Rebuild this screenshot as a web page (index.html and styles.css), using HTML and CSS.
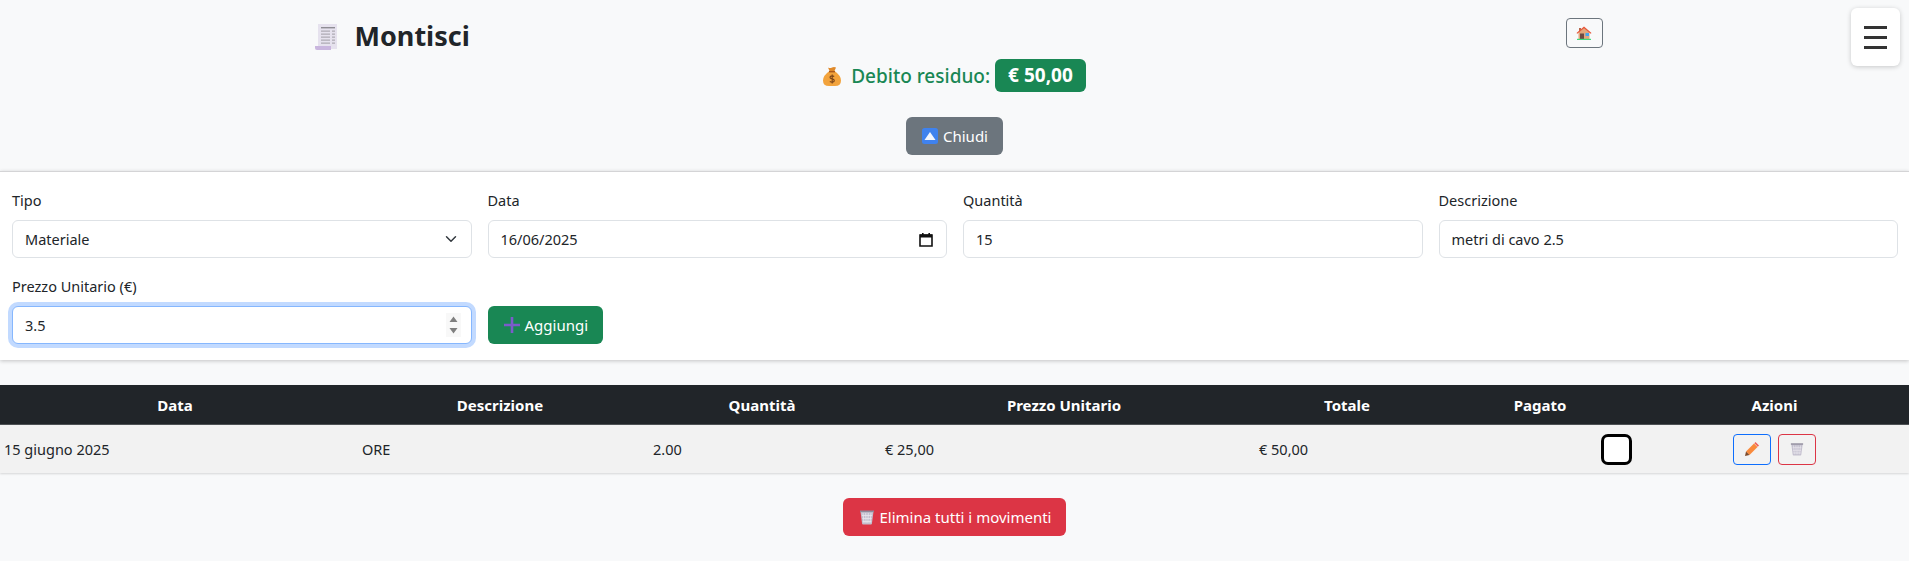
FILE: index.html
```html
<!DOCTYPE html>
<html lang="it">
<head>
  <meta charset="UTF-8">
  <title>Montisci</title>
  <link rel="stylesheet" href="styles.css">
</head>
<body>
  <svg class="defs" width="0" height="0">
    <symbol id="trash" viewBox="0 0 16 16">
      <path d="M1.5 2.5h13l-1.6 12.2q-.1.8-.9.8H4q-.8 0-.9-.8z" fill="#c3bfce"/>
      <path d="M1 1.5h14v1.6H1z" fill="#8f8b9c"/>
      <path d="M4 4l1 10M6.7 4l.4 10M9.3 4l-.4 10M12 4l-1 10M3 6.5h10M3.4 9.5h9.2M3.7 12.5h8.6" stroke="#e9e6ee" stroke-width=".8" fill="none"/>
    </symbol>
  </svg>

  <button class="menu-toggle">
    <span></span><span></span><span></span>
  </button>

  <div class="container">
    <div class="title-row">
      <h3 class="title">
        <svg class="icon-receipt" viewBox="0 0 23 27">
          <path d="M3 1h19v25H3z" fill="#e6e2ee"/>
          <path d="M0 23h16v4H2q-2 0-2-2z" fill="#c9b6de"/>
          <path d="M6 4h14v1.4H6z" fill="#8f8d94"/>
          <path d="M6 7.500h9v1.300H6zM6 10.500h9v1.300H6zM6 13.500h9v1.300H6zM6 16.500h9v1.300H6zM6 19.500h9v1.300H6zM17 7.500h3v1.300h-3zM17 10.500h3v1.300h-3zM17 13.500h3v1.300h-3zM17 16.500h3v1.300h-3zM17 19.500h3v1.300h-3z" fill="#aeabb4"/>
        </svg>
        Montisci
      </h3>
      <button class="btn-home">
        <svg viewBox="0 0 16 14" width="16" height="14">
          <path d="M3 2h2v4H3z" fill="#b5654a"/>
          <path d="M2.500 6L8 1.500 13.500 6v7h-11z" fill="#e2a77c"/>
          <path d="M.5 7L8 .5 15.500 7l-.8.8L8 2.200 1.300 7.800z" fill="#e8573a"/>
          <path d="M4 7.500h4V13H4z" fill="#6f4a42"/>
          <path d="M9.500 7h3.500v3H9.500z" fill="#45a7ee"/>
          <path d="M1 12.800h14V14H1z" fill="#3fdc7c"/>
        </svg>
      </button>
    </div>

    <div class="debt">
      <svg class="icon-bag" viewBox="0 0 18 20">
        <path d="M5 1.500q2 1 4 0t4 0L11.500 5h-5z" fill="#e08a2a"/>
        <path d="M6.500 5h5Q18 9.500 18 14.500 18 20 12 20H6Q0 20 0 14.500 0 9.500 6.500 5z" fill="#f2a33c"/>
        <path d="M6 5h6v1.400H6z" fill="#a9581c"/>
        <path d="M11.200 10.500Q9 9.300 7.300 10.500q-1 1.500 1.700 2.300 3 .8 2 2.700-1.800 1.300-4.200 0M9.200 8.500v9" stroke="#7a4418" stroke-width="1.100" fill="none"/>
      </svg>
      <span class="debt-label">Debito residuo:</span>
      <span class="badge">€ 50,00</span>
    </div>

    <div class="toggle-row">
      <button class="btn btn-grey">
        <svg class="icon-16" viewBox="0 0 16 16">
          <rect width="16" height="16" rx="2.500" fill="#3f82ee"/>
          <path d="M8 4l5.500 8h-11z" fill="#f2f6ff"/>
        </svg>
        Chiudi
      </button>
    </div>
  </div>

  <form class="entry-form">
    <div class="form-grid">
      <div>
        <label>Tipo</label>
        <select class="control">
          <option>Materiale</option>
        </select>
      </div>
      <div>
        <label>Data</label>
        <div class="control field">
          <input type="text" value="16/06/2025">
          <svg class="icon-calendar" viewBox="0 0 14 15" width="14" height="15">
            <path d="M1 3h12v11H1z" fill="none" stroke="#111" stroke-width="1.600"/>
            <path d="M1 2.500h12v3H1zM3 1h1.600v2H3zM9.400 1H11v2H9.400z" fill="#111"/>
          </svg>
        </div>
      </div>
      <div>
        <label>Quantità</label>
        <input class="control" type="text" value="15">
      </div>
      <div>
        <label>Descrizione</label>
        <input class="control" type="text" value="metri di cavo 2.5">
      </div>
      <div>
        <label>Prezzo Unitario (€)</label>
        <div class="control field focused">
          <input type="text" value="3.5">
          <svg class="icon-spin" viewBox="0 0 15 24" width="15" height="24">
            <path d="M0 0h15v24H0z" fill="#f8f8f8"/>
            <path d="M7.500 3.500l4 5.500h-8zM7.500 20.500l-4-5.500h8z" fill="#808080"/>
          </svg>
        </div>
      </div>
      <div class="form-action">
        <button type="button" class="btn btn-green">
          <svg class="icon-16" viewBox="0 0 16 16">
            <path d="M6.700 0h2.600v6.700H16v2.600H9.300V16H6.700V9.300H0V6.700h6.700z" fill="#7b5bcb"/>
          </svg>
          Aggiungi
        </button>
      </div>
    </div>
  </form>

  <table class="moves">
    <colgroup>
      <col class="col-date">
      <col class="col-desc">
      <col class="col-qty">
      <col class="col-price">
      <col class="col-total">
      <col class="col-paid">
      <col>
    </colgroup>
    <thead>
      <tr>
        <th>Data</th>
        <th>Descrizione</th>
        <th>Quantità</th>
        <th>Prezzo Unitario</th>
        <th>Totale</th>
        <th>Pagato</th>
        <th>Azioni</th>
      </tr>
    </thead>
    <tbody>
      <tr>
        <td class="cell-date">15 giugno 2025</td>
        <td class="cell-desc">ORE</td>
        <td class="cell-qty">2.00</td>
        <td class="cell-price">€ 25,00</td>
        <td class="cell-total">€ 50,00</td>
        <td class="cell-paid"><span class="checkbox"></span></td>
        <td class="cell-actions">
          <button class="btn-small btn-outline-blue">
            <svg viewBox="0 0 14 14" width="14" height="14">
              <path d="M10.500 0L14 3.500 12.800 4.700 9.300 1.200z" fill="#f0605a"/>
              <path d="M9 1.500L12.500 5 4.500 13 1 9.500z" fill="#f98a3c"/>
              <path d="M1 9.500L4.500 13 0 14z" fill="#7c4a2c"/>
            </svg>
          </button>
          <button class="btn-small btn-outline-red">
            <svg width="14" height="14"><use href="#trash"/></svg>
          </button>
        </td>
      </tr>
    </tbody>
  </table>

  <div class="footer-row">
    <button class="btn btn-red">
      <svg class="icon-16" width="16" height="16"><use href="#trash"/></svg>
      Elimina tutti i movimenti
    </button>
  </div>
</body>
</html>
```

FILE: styles.css
```css
body {
  margin: 0;
  background-color: #f8f9fa;
  color: #212529;
  font-family: "Noto Sans", sans-serif;
  font-size: 15px;
  line-height: 24px;
}
.defs {
  display: block;
  height: 0;
}
.menu-toggle {
  position: absolute;
  top: 8px;
  right: 9px;
  width: 49px;
  height: 58px;
  padding: 0;
  display: flex;
  flex-direction: column;
  align-items: center;
  justify-content: center;
  gap: 7px;
  background-color: #fff;
  border: none;
  border-radius: 6px;
  box-shadow: 0 1px 5px rgba(0, 0, 0, 0.2);
}
.menu-toggle span {
  display: block;
  width: 23px;
  height: 3px;
  background-color: #333;
}
.container {
  width: 1296px;
  margin: 0 auto;
  padding-top: 18px;
}
.title-row {
  display: flex;
  justify-content: space-between;
  align-items: flex-start;
  height: 41px;
}
.title {
  margin: 0;
  padding-left: 8px;
  display: flex;
  align-items: center;
  gap: 17px;
  font-size: 27px;
  font-weight: 700;
  line-height: 36px;
}
.icon-receipt {
  width: 23px;
  height: 27px;
}
.btn-home {
  width: 37px;
  height: 30px;
  padding: 0;
  display: flex;
  align-items: center;
  justify-content: center;
  background: none;
  border: 1px solid #6c757d;
  border-radius: 4px;
}
.debt {
  display: flex;
  align-items: center;
  justify-content: center;
  height: 33px;
  font-size: 19px;
  color: #198754;
  font-weight: 500;
}
.icon-bag {
  width: 18px;
  height: 20px;
  margin-right: 10px;
}
.badge {
  margin-left: 5px;
  padding: 0 13px;
  height: 33px;
  line-height: 33px;
  background-color: #198754;
  color: #fff;
  font-weight: 700;
  border-radius: 6px;
}
.toggle-row {
  margin-top: 25px;
  margin-bottom: 16px;
  text-align: center;
}
.btn {
  display: inline-flex;
  align-items: center;
  gap: 5px;
  height: 38px;
  padding: 0 15px 0 16px;
  border: none;
  border-radius: 6px;
  color: #fff;
  font-family: inherit;
  font-size: 15px;
}
.btn-grey {
  background-color: #6c757d;
}
.btn-green {
  background-color: #198754;
}
.btn-red {
  background-color: #dc3545;
}
.icon-16 {
  width: 16px;
  height: 16px;
}
.entry-form {
  padding: 16px 11px 16px 12px;
  background-color: #fff;
  border-top: 1px solid #d4d4d6;
  box-shadow: 0 1px 4px rgba(0, 0, 0, 0.22);
}
.form-grid {
  display: grid;
  grid-template-columns: repeat(4, 1fr);
  gap: 16px;
}
label {
  display: block;
  margin-bottom: 8px;
  font-size: 14.500px;
}
.control {
  display: block;
  box-sizing: border-box;
  width: 100%;
  height: 38px;
  padding: 0 12px;
  background-color: #fff;
  border: 1px solid #dee2e6;
  border-radius: 6px;
  color: #212529;
  font-family: inherit;
  font-size: 14.500px;
  outline: none;
}
select.control {
  appearance: none;
  background-image: url("data:image/svg+xml,%3csvg xmlns='http://www.w3.org/2000/svg' viewBox='0 0 16 16'%3e%3cpath fill='none' stroke='%23343a40' stroke-linecap='round' stroke-linejoin='round' stroke-width='2' d='m2 5 6 6 6-6'/%3e%3c/svg%3e");
  background-repeat: no-repeat;
  background-position: right 12px center;
  background-size: 16px 12px;
}
.field {
  display: flex;
  align-items: center;
}
.field input {
  flex: 1;
  min-width: 0;
  padding: 0;
  border: none;
  outline: none;
  color: #212529;
  font-family: inherit;
  font-size: 14.500px;
}
.icon-calendar {
  margin-right: 1px;
}
.focused {
  border-color: #86b7fe;
  box-shadow: 0 0 0 4px #c2daff;
}
.icon-spin {
  margin-right: -2px;
}
.form-action {
  grid-column: span 3;
  display: flex;
  align-items: flex-end;
}
.moves {
  width: 100%;
  margin-top: 25px;
  border-collapse: collapse;
  table-layout: fixed;
  box-shadow: 0 1px 2px rgba(0, 0, 0, 0.14);
}
.col-date {
  width: 350px;
}
.col-desc {
  width: 300px;
}
.col-qty {
  width: 224px;
}
.col-price {
  width: 380px;
}
.col-total {
  width: 186px;
}
.col-paid {
  width: 200px;
}
.moves th {
  height: 39px;
  padding: 0;
  background-color: #212529;
  border-bottom: 1px solid #4d5154;
  color: #fff;
  font-size: 15px;
  font-weight: 700;
}
.moves td {
  height: 48px;
  padding: 0;
  background-color: #f2f2f2;
  font-size: 14.500px;
}
.cell-date {
  padding-left: 4px !important;
}
.cell-desc {
  padding-left: 12px !important;
}
.cell-qty {
  padding-left: 3px !important;
}
.cell-price {
  padding-left: 11px !important;
}
.cell-total {
  padding-left: 5px !important;
}
.cell-paid {
  text-align: right;
  padding-right: 8px !important;
}
.checkbox {
  display: inline-block;
  box-sizing: border-box;
  width: 31px;
  height: 31px;
  vertical-align: middle;
  background-color: #fff;
  border: 3px solid #000;
  border-radius: 7px;
}
.cell-actions {
  text-align: center;
}
.btn-small {
  width: 38px;
  height: 31px;
  margin: 0 2px;
  padding: 0;
  background: none;
  border-radius: 4px;
  vertical-align: middle;
}
.btn-small svg {
  display: block;
  margin: 0 auto;
}
.btn-outline-blue {
  border: 1px solid #0d6efd;
}
.btn-outline-red {
  border: 1px solid #dc3545;
}
.footer-row {
  margin-top: 25px;
  text-align: center;
}
```
